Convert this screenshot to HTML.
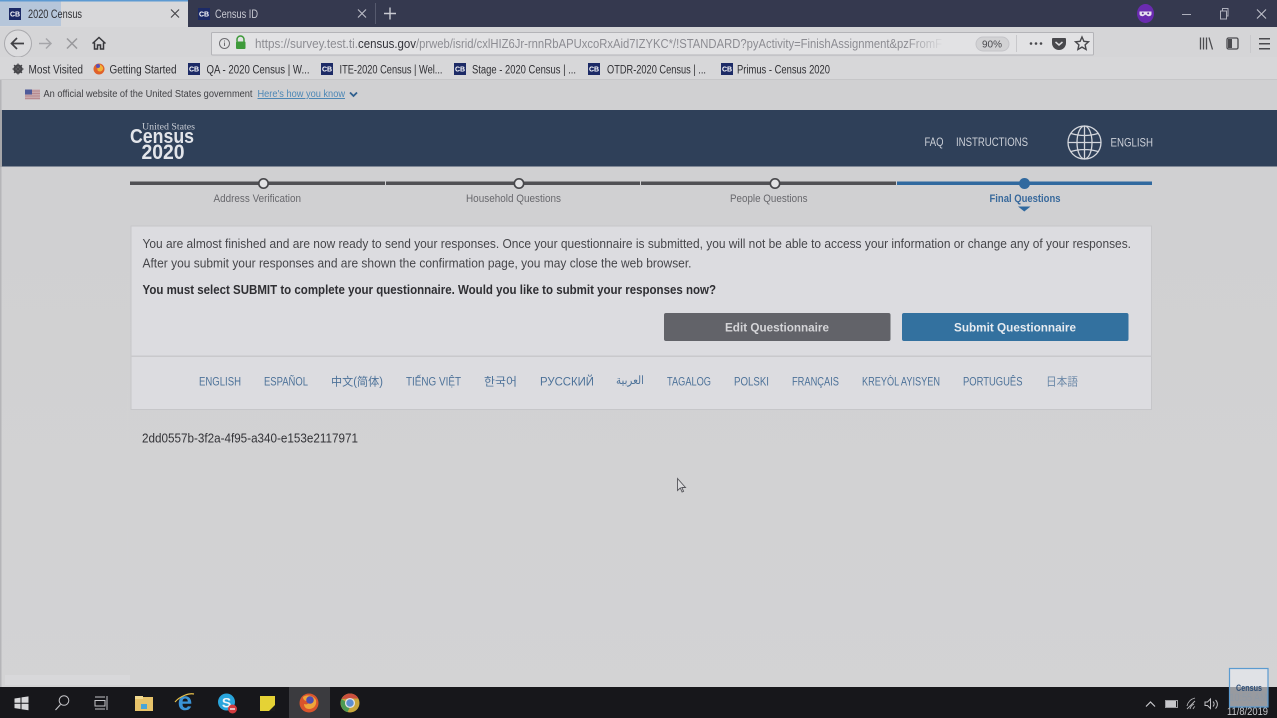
<!DOCTYPE html>
<html>
<head>
<meta charset="utf-8">
<title>2020 Census</title>
<style>
html,body{margin:0;padding:0;width:1277px;height:718px;overflow:hidden;background:#cfcfd1}
svg{display:block;position:absolute;left:0;top:0;filter:blur(.35px)}
text{font-family:"Liberation Sans","Noto Sans CJK SC",sans-serif}
.b{fill:#2f2f33;font-size:11.5px}
.l{fill:#4d7299;font-size:11.5px;text-anchor:start}
.p{fill:#46464a;font-size:13px}
.c{fill:#fff;font-size:7px;font-weight:700}
</style>
</head>
<body>
<svg width="1277" height="718" viewBox="0 0 1277 718" xmlns="http://www.w3.org/2000/svg">
<defs>
<linearGradient id="bg" x1="0" y1="0" x2="0" y2="1"><stop offset="0" stop-color="#cfcfd1"/><stop offset="1" stop-color="#d3d3d4"/></linearGradient>
<linearGradient id="fade" x1="0" y1="0" x2="1" y2="0"><stop offset="0" stop-color="#e2e2e4" stop-opacity="0"/><stop offset="1" stop-color="#e2e2e4"/></linearGradient>
</defs>
<!-- page -->
<rect width="1277" height="718" fill="url(#bg)"/>
<rect x="5" y="675" width="125" height="10" fill="#dcdcdd" opacity=".6"/>
<!-- titlebar -->
<rect width="1277" height="27" fill="#35394f"/>
<rect x="0" y="0" width="188" height="27" fill="#d8d8da"/>
<rect x="0" y="1" width="61" height="25" fill="#b6c6da"/>
<rect x="0" y="0" width="188" height="1.500" fill="#5d9ad2"/>
<rect x="9" y="8" width="12" height="12" fill="#1c2a66"/><text x="15" y="16.500" class="c" text-anchor="middle">CB</text>
<text x="28" y="18" class="b" textLength="54" lengthAdjust="spacingAndGlyphs">2020 Census</text>
<path d="M171 9.500l8 8M179 9.500l-8 8" stroke="#48484c" stroke-width="1.200"/>
<rect x="198" y="8" width="12" height="12" fill="#1c2a66"/><text x="204" y="16.500" class="c" text-anchor="middle">CB</text>
<text x="215" y="18" font-size="11.500" fill="#c9cad2" textLength="43" lengthAdjust="spacingAndGlyphs">Census ID</text>
<path d="M358 9.500l8 8M366 9.500l-8 8" stroke="#b8b9c3" stroke-width="1.200"/>
<rect x="375" y="3" width="1" height="21" fill="#565a6e"/>
<path d="M390 7.500v12M384 13.500h12" stroke="#c9cad2" stroke-width="1.400"/>
<!-- mask icon -->
<ellipse cx="1145.500" cy="13.500" rx="8.500" ry="9.500" fill="#6a2bb0"/>
<path d="M1139.500 11.500h12v2.500c0 1.600-1.600 2.200-3 2.200-1.500 0-2-1.400-3-1.400s-1.500 1.400-3 1.400c-1.400 0-3-.6-3-2.200z" fill="#e6e0f0"/>
<circle cx="1142.800" cy="13.400" r="1" fill="#5a2a96"/><circle cx="1148.200" cy="13.400" r="1" fill="#5a2a96"/>
<!-- window buttons -->
<rect x="1182" y="14" width="9" height="1" fill="#aeb0bc"/>
<path d="M1220.500 11h6v8h-6zM1222.500 11V8.500h5.500v7.500h-2" fill="none" stroke="#aeb0bc" stroke-width="1"/>
<path d="M1257 9.500l9 9M1266 9.500l-9 9" stroke="#bfc1cb" stroke-width="1.100"/>
<!-- toolbar -->
<rect x="0" y="27" width="1277" height="30" fill="#d5d5d7"/>
<circle cx="18" cy="43.500" r="13.500" fill="#dcdcde" stroke="#a9a9ad" stroke-width="1"/>
<path d="M24 43.500H12M17 38l-5.500 5.500L17 49" fill="none" stroke="#3f3f44" stroke-width="1.700"/>
<path d="M51 43.500H39M46 38.500l5 5-5 5" fill="none" stroke="#a5a5a9" stroke-width="1.500"/>
<path d="M67 38.500l10 10M77 38.500l-10 10" stroke="#98989c" stroke-width="1.500"/>
<path d="M92.500 43.500l6.500-6 6.500 6M94.500 42.500v6.500h3v-4h3v4h3v-6.500" fill="none" stroke="#37373b" stroke-width="1.500"/>
<rect x="211.500" y="32.500" width="882" height="22.500" rx="1" fill="#e2e2e4" stroke="#b4b4b8"/>
<circle cx="224.500" cy="43.500" r="5" fill="none" stroke="#6c6c70" stroke-width="1"/>
<rect x="224" y="42.500" width="1" height="3.500" fill="#6c6c70"/><rect x="224" y="40.500" width="1" height="1" fill="#6c6c70"/>
<path d="M237 41.500v-2a3.500 3.500 0 0 1 7 0v2" fill="none" stroke="#3e9a3a" stroke-width="1.500"/>
<rect x="236" y="41.500" width="9.500" height="7.500" rx="1" fill="#3e9a3a"/>
<text x="255" y="48" font-size="12.500" fill="#8c8c92" textLength="103" lengthAdjust="spacingAndGlyphs">https://survey.test.ti.</text>
<text x="358" y="48" font-size="12.500" fill="#33333a" textLength="58" lengthAdjust="spacingAndGlyphs">census.gov</text>
<text x="416" y="48" font-size="12.500" fill="#8c8c92" textLength="526" lengthAdjust="spacingAndGlyphs">/prweb/isrid/cxlHIZ6Jr-rnnRbAPUxcoRxAid7IZYKC*/!STANDARD?pyActivity=FinishAssignment&amp;pzFromF</text>
<rect x="905" y="33" width="40" height="21" fill="url(#fade)"/>
<rect x="945" y="33" width="31" height="21" fill="#e2e2e4"/>
<rect x="976" y="37" width="33" height="14" rx="7" fill="#d2d2d4" stroke="#c4c4c8"/>
<text x="992" y="47.500" font-size="10" fill="#4a4a4e" text-anchor="middle">90%</text>
<rect x="1016" y="35" width="1" height="17" fill="#c8c8cb"/>
<circle cx="1031" cy="43.500" r="1.300" fill="#47474b"/><circle cx="1036" cy="43.500" r="1.300" fill="#47474b"/><circle cx="1041" cy="43.500" r="1.300" fill="#47474b"/>
<path d="M1053 38h12a1 1 0 0 1 1 1v4a7 7 0 0 1-14 0v-4a1 1 0 0 1 1-1z" fill="#48484c"/>
<path d="M1055.500 42l3.500 3 3.500-3" fill="none" stroke="#dcdcde" stroke-width="1.500"/>
<path d="M1082 37l1.900 4.300 4.600.500-3.400 3.100 1 4.600-4.100-2.400-4.100 2.400 1-4.600-3.400-3.100 4.600-.500z" fill="none" stroke="#48484c" stroke-width="1.400"/>
<path d="M1200.500 37.500v12M1203.500 37.500v12M1206.500 37.500v12M1209 37.500l3.500 12" fill="none" stroke="#4b4b4f" stroke-width="1.300"/>
<rect x="1227" y="38" width="11" height="11" rx="1.500" fill="none" stroke="#4b4b4f" stroke-width="1.300"/><rect x="1228" y="39" width="4" height="9" fill="#4b4b4f"/>
<rect x="1250" y="35" width="1" height="18" fill="#c8c8cb"/>
<rect x="1259" y="38" width="11" height="1.500" fill="#4b4b4f"/><rect x="1259" y="43" width="11" height="1.500" fill="#4b4b4f"/><rect x="1259" y="48" width="11" height="1.500" fill="#4b4b4f"/>
<!-- bookmarks -->
<rect x="0" y="57" width="1277" height="22" fill="#d7d7d9"/>
<rect x="0" y="79" width="1277" height="1" fill="#c6c6c8"/>
<circle cx="18" cy="69" r="3.500" fill="none" stroke="#454549" stroke-width="2.200"/>
<path d="M18 63.500v11M12.500 69h11M14 65l8 8M22 65l-8 8" stroke="#454549" stroke-width="1.200"/>
<text x="28.500" y="73.500" class="b" textLength="54.500" lengthAdjust="spacingAndGlyphs">Most Visited</text>
<circle cx="99" cy="69" r="5.500" fill="#e0612a"/><path d="M97 64.500a5 5 0 0 1 6 3c.5 2-1 4-3 4-2 0-3-1.500-2.500-3z" fill="#f2b33a"/><circle cx="98" cy="66" r="2" fill="#5a50b8"/>
<text x="109.500" y="73.500" class="b" textLength="67" lengthAdjust="spacingAndGlyphs">Getting Started</text>
<rect x="188" y="63" width="12" height="12" fill="#1c2a66"/><text x="194" y="71.500" class="c" text-anchor="middle">CB</text>
<text x="206.500" y="73.500" class="b" textLength="103" lengthAdjust="spacingAndGlyphs">QA - 2020 Census | W...</text>
<rect x="321" y="63" width="12" height="12" fill="#1c2a66"/><text x="327" y="71.500" class="c" text-anchor="middle">CB</text>
<text x="339.500" y="73.500" class="b" textLength="103" lengthAdjust="spacingAndGlyphs">ITE-2020 Census | Wel...</text>
<rect x="454" y="63" width="12" height="12" fill="#1c2a66"/><text x="460" y="71.500" class="c" text-anchor="middle">CB</text>
<text x="472" y="73.500" class="b" textLength="104" lengthAdjust="spacingAndGlyphs">Stage - 2020 Census | ...</text>
<rect x="588" y="63" width="12" height="12" fill="#1c2a66"/><text x="594" y="71.500" class="c" text-anchor="middle">CB</text>
<text x="607" y="73.500" class="b" textLength="99" lengthAdjust="spacingAndGlyphs">OTDR-2020 Census | ...</text>
<rect x="721" y="63" width="12" height="12" fill="#1c2a66"/><text x="727" y="71.500" class="c" text-anchor="middle">CB</text>
<text x="737" y="73.500" class="b" textLength="93" lengthAdjust="spacingAndGlyphs">Primus - Census 2020</text>
<!-- gov banner -->
<rect x="0" y="80" width="1277" height="30" fill="#d0d0d2"/>
<rect x="25" y="89.500" width="15" height="10" fill="#c9a9ad"/>
<path d="M25 91h15M25 93.500h15M25 96h15M25 98.500h15" stroke="#b88b90" stroke-width="1"/>
<rect x="25" y="89.500" width="7" height="5" fill="#4e5a9a"/>
<text x="43.500" y="97" font-size="10" fill="#3f3f43" textLength="209" lengthAdjust="spacingAndGlyphs">An official website of the United States government</text>
<text x="257.500" y="97" font-size="10" fill="#4d87b5" text-decoration="underline" textLength="87.500" lengthAdjust="spacingAndGlyphs">Here's how you know</text>
<path d="M350 92.500l3.500 3.500 3.500-3.500" fill="none" stroke="#2f5f8e" stroke-width="1.800"/>
<!-- header -->
<rect x="2" y="110" width="1275" height="56.500" fill="#2f4059"/>
<rect x="0" y="80" width="1.500" height="607" fill="#b5b5b8"/>
<rect x="0" y="110" width="2" height="57" fill="#a6a6a9"/>
<text x="142" y="129.500" font-size="9" fill="#c8ccd4" style="font-family:'Liberation Serif',serif" textLength="53" lengthAdjust="spacingAndGlyphs">United States</text>
<text x="130" y="143" font-size="20.500" font-weight="700" fill="#e3e5ea" textLength="64" lengthAdjust="spacingAndGlyphs">Census</text>
<text x="141.500" y="159" font-size="21" font-weight="700" fill="#e3e5ea" textLength="43" lengthAdjust="spacingAndGlyphs">2020</text>
<text x="924.500" y="146" font-size="12" fill="#ccd0d8" textLength="19" lengthAdjust="spacingAndGlyphs">FAQ</text>
<text x="956" y="146" font-size="12" fill="#ccd0d8" textLength="72" lengthAdjust="spacingAndGlyphs">INSTRUCTIONS</text>
<g fill="none" stroke="#d4d7dd" stroke-width="1.300">
<circle cx="1084.500" cy="142.500" r="16.500"/>
<ellipse cx="1084.500" cy="142.500" rx="7.500" ry="16.500"/>
<path d="M1084.500 126v33M1068 142.500h33M1071 133.500q13.500 4 27 0M1071 151.500q13.500-4 27 0"/>
</g>
<text x="1110.500" y="146.500" font-size="12" fill="#ccd0d8" textLength="42.500" lengthAdjust="spacingAndGlyphs">ENGLISH</text>
<!-- progress -->
<rect x="130" y="181.500" width="255" height="3.500" fill="#505054"/>
<rect x="386" y="181.500" width="254" height="3.500" fill="#505054"/>
<rect x="641" y="181.500" width="255" height="3.500" fill="#505054"/>
<rect x="897" y="181.500" width="255" height="3.500" fill="#30699f"/>
<circle cx="263.500" cy="183.500" r="4.700" fill="#e2e2e4" stroke="#47474b" stroke-width="1.700"/>
<circle cx="519" cy="183.500" r="4.700" fill="#e2e2e4" stroke="#47474b" stroke-width="1.700"/>
<circle cx="775" cy="183.500" r="4.700" fill="#e2e2e4" stroke="#47474b" stroke-width="1.700"/>
<circle cx="1024.500" cy="183.500" r="5.500" fill="#30699f"/>
<text x="213.500" y="202" font-size="11" fill="#68686d" textLength="87.500" lengthAdjust="spacingAndGlyphs">Address Verification</text>
<text x="466" y="202" font-size="11" fill="#68686d" textLength="95" lengthAdjust="spacingAndGlyphs">Household Questions</text>
<text x="730" y="202" font-size="11" fill="#68686d" textLength="77.500" lengthAdjust="spacingAndGlyphs">People Questions</text>
<text x="989.500" y="202" font-size="11" font-weight="700" fill="#38699c" textLength="71" lengthAdjust="spacingAndGlyphs">Final Questions</text>
<path d="M1018 206.500h12.500l-6.200 5z" fill="#30699f"/>
<!-- panel -->
<rect x="131" y="226" width="1020.500" height="183.500" fill="#dcdce0" stroke="#c6c6c9" stroke-width="1"/>
<rect x="131" y="355.500" width="1020.500" height="1.500" fill="#c9c9cc"/>
<text x="142.500" y="248" class="p" textLength="988.500" lengthAdjust="spacingAndGlyphs">You are almost finished and are now ready to send your responses. Once your questionnaire is submitted, you will not be able to access your information or change any of your responses.</text>
<text x="142.500" y="267.500" class="p" textLength="549" lengthAdjust="spacingAndGlyphs">After you submit your responses and are shown the confirmation page, you may close the web browser.</text>
<text x="142.500" y="294" font-size="13" font-weight="700" fill="#2f2f33" textLength="573.500" lengthAdjust="spacingAndGlyphs">You must select SUBMIT to complete your questionnaire. Would you like to submit your responses now?</text>
<rect x="664" y="313" width="226.500" height="28" rx="2" fill="#626369"/>
<text x="777" y="331.500" font-size="12" font-weight="700" fill="#d5d5d8" text-anchor="middle" textLength="104" lengthAdjust="spacingAndGlyphs">Edit Questionnaire</text>
<rect x="902" y="313" width="226.500" height="28" rx="2" fill="#33719f"/>
<text x="1015" y="331.500" font-size="12" font-weight="700" fill="#e6ebf0" text-anchor="middle" textLength="122" lengthAdjust="spacingAndGlyphs">Submit Questionnaire</text>
<!-- languages -->
<text x="199" y="385.500" class="l" textLength="42" lengthAdjust="spacingAndGlyphs">ENGLISH</text>
<text x="264" y="385.500" class="l" textLength="44" lengthAdjust="spacingAndGlyphs">ESPAÑOL</text>
<text x="331" y="385.500" class="l" textLength="52" lengthAdjust="spacingAndGlyphs">中文(简体)</text>
<text x="406" y="385.500" class="l" textLength="55" lengthAdjust="spacingAndGlyphs">TIẾNG VIỆT</text>
<text x="484" y="385.500" class="l" style="font-family:'Noto Sans CJK KR',sans-serif" textLength="33" lengthAdjust="spacingAndGlyphs">한국어</text>
<text x="540" y="385.500" class="l" textLength="54" lengthAdjust="spacingAndGlyphs">РУССКИЙ</text>
<text x="616" y="384" class="l" textLength="28" lengthAdjust="spacingAndGlyphs">العربية</text>
<text x="667" y="385.500" class="l" textLength="44" lengthAdjust="spacingAndGlyphs">TAGALOG</text>
<text x="734" y="385.500" class="l" textLength="35" lengthAdjust="spacingAndGlyphs">POLSKI</text>
<text x="792" y="385.500" class="l" textLength="47" lengthAdjust="spacingAndGlyphs">FRANÇAIS</text>
<text x="862" y="385.500" class="l" textLength="78" lengthAdjust="spacingAndGlyphs">KREYÒL AYISYEN</text>
<text x="963" y="385.500" class="l" textLength="59.500" lengthAdjust="spacingAndGlyphs">PORTUGUÊS</text>
<text x="1046" y="385.500" class="l" fill-opacity=".8" style="font-family:'Noto Sans CJK JP',sans-serif" textLength="32" lengthAdjust="spacingAndGlyphs">日本語</text>
<text x="142" y="442.500" font-size="12.500" fill="#333337" textLength="216" lengthAdjust="spacingAndGlyphs">2dd0557b-3f2a-4f95-a340-e153e2117971</text>
<!-- cursor -->
<path d="M677.500 478.500v12l2.800-2.500 1.800 4 1.500-.7-1.800-3.800h3.700z" fill="#dcdcde" stroke="#55555a" stroke-width=".9"/>
<!-- taskbar -->
<rect x="0" y="687" width="1277" height="31" fill="#17171b"/>
<rect x="289" y="687" width="41" height="31" fill="#3b3b3f"/>
<path d="M14.500 698.500l6-.9v5.200h-6zM21.500 697.400l7-1v6.400h-7zM14.500 703.800h6v5.200l-6-.9zM21.500 703.800h7v6.400l-7-1z" fill="#d8d8da"/>
<circle cx="64" cy="700.500" r="4.800" fill="none" stroke="#c4c4c8" stroke-width="1"/>
<path d="M60.500 704.500l-5 5.500" stroke="#c4c4c8" stroke-width="1.100"/>
<path d="M95 697h10M95 709h10M95 700.500h10v5.500H95zM107 696v14" fill="none" stroke="#c4c4c8" stroke-width="1"/>
<rect x="135" y="697" width="18" height="14" fill="#e7c36a"/>
<rect x="135" y="696" width="8" height="3" fill="#f1d98f"/>
<rect x="141" y="704" width="6" height="5" fill="#4aa5d8"/>
<text x="185" y="710" font-size="26" font-weight="700" fill="#3a93d6" text-anchor="middle">e</text>
<path d="M175 702c5-6 14-9 19-8" fill="none" stroke="#e8c04a" stroke-width="1.200"/>
<circle cx="226.500" cy="702" r="8.500" fill="#29a5dc"/>
<text x="226.500" y="707.500" font-size="14" font-weight="700" fill="#eef4f8" text-anchor="middle">S</text>
<circle cx="232.500" cy="709" r="4.500" fill="#d33a3e"/>
<rect x="230" y="708.300" width="5" height="1.400" fill="#f3f3f3"/>
<rect x="260" y="696" width="15" height="15" fill="#e5d235"/>
<path d="M275 705l-6 6h6z" fill="#1c1c1c"/>
<circle cx="309" cy="703" r="9.500" fill="#d9542c"/>
<path d="M303 697a9 9 0 0 1 13 3c1 5-2 9-7 9-3 0-5-2-5-5 2 1 5 0 5-2-2-1-6-1-6-5z" fill="#efa53a"/>
<circle cx="310" cy="700" r="3.800" fill="#4f4cae"/>
<circle cx="350" cy="703" r="9.500" fill="#c9a63b"/>
<path d="M350 693.500a9.500 9.500 0 0 1 8.400 5H350z" fill="#cb4f3e"/>
<path d="M341.500 699a9.500 9.500 0 0 0 6 13l3.500-7z" fill="#4d9a54"/>
<path d="M341.500 699a9.500 9.500 0 0 1 8.500-5.500v5z" fill="#cb4f3e"/>
<circle cx="350" cy="703" r="4.400" fill="#5d8ed0" stroke="#e2e2e4" stroke-width="1.300"/>
<path d="M1146 706.500l4.500-4.500 4.500 4.500" fill="none" stroke="#c8c8cc" stroke-width="1.200"/>
<rect x="1166" y="701" width="10" height="6" fill="#c8c8cc"/><rect x="1165.500" y="700.500" width="12" height="7" fill="none" stroke="#9a9a9e"/>
<path d="M1187 709l8-8M1190 709c.5-2 2-4 4-5M1193 709c.3-1 1-2 2-2.500M1187 706c1-4 4-7 8-8" fill="none" stroke="#b4b4b8" stroke-width=".9"/>
<path d="M1205 702h2.500l3-3v9.500l-3-3H1205zM1213 701.500c1.500 1.500 1.500 3.500 0 5M1215.500 700c2.500 2.500 2.500 6 0 8.500" fill="none" stroke="#c0c0c4" stroke-width="1"/>
<text x="1227" y="715" font-size="11" fill="#c8c8cc" textLength="41" lengthAdjust="spacingAndGlyphs">11/8/2019</text>
<!-- watermark -->
<rect x="1229.500" y="668.500" width="38.500" height="38.500" fill="#e8ecf0" fill-opacity=".62" stroke="#5b9bd0" stroke-width="1.200"/>
<text x="1249" y="691" font-size="9" font-weight="700" fill="#2f4f78" text-anchor="middle" textLength="26" lengthAdjust="spacingAndGlyphs">Census</text>
<text x="1229.500" y="701" font-size="11" fill="#8f99a6" textLength="38" lengthAdjust="spacingAndGlyphs">10:55 AM</text>
</svg>
</body>
</html>
